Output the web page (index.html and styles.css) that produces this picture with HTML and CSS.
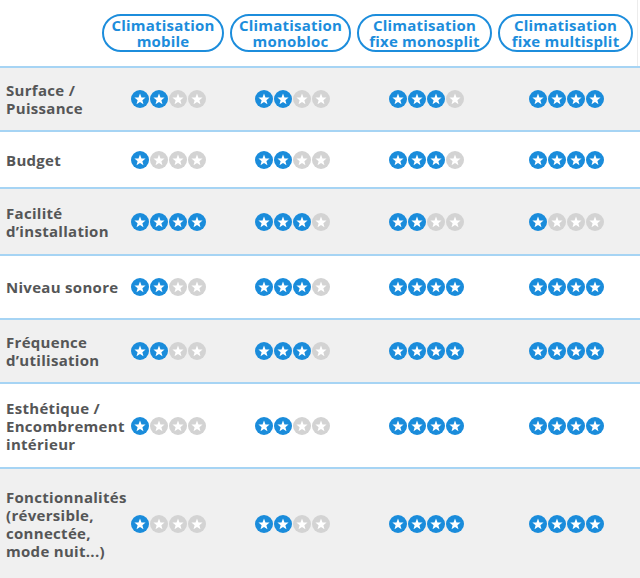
FILE: index.html
```html
<!DOCTYPE html>
<html lang="fr">
<head>
<meta charset="utf-8">
<title>Comparatif climatisation</title>
<link rel="stylesheet" href="styles.css">
</head>
<body>
<svg class="defs" width="0" height="0" aria-hidden="true">
  <symbol id="star" viewBox="0 0 20 20">
    <circle cx="10" cy="10" r="10"/>
    <path fill="#fff" d="M10 3.9 L11.65 8.2 L16.2 8.4 L12.65 11.3 L13.85 15.7 L10 13.2 L6.15 15.7 L7.35 11.3 L3.8 8.4 L8.35 8.2Z"/>
  </symbol>
</svg>
<div class="table">
  <div class="head">
    <div class="pill p1">Climatisation<br>mobile</div>
    <div class="pill p2">Climatisation<br>monobloc</div>
    <div class="pill p3">Climatisation<br>fixe monosplit</div>
    <div class="pill p4">Climatisation<br>fixe multisplit</div>
  </div>
  <div id="rows"></div>
</div>
<script src="app.js"></script>
</body>
</html>
```
FILE: app.js
```js
const data = [
  ["Surface /<br>Puissance", [2,2,3,4], "alt"],
  ["Budget", [1,2,3,4], ""],
  ["Facilité<br>d’installation", [4,3,2,1], "alt roomy"],
  ["Niveau sonore", [2,3,4,4], "wide"],
  ["Fréquence<br>d’utilisation", [2,3,4,4], "alt"],
  ["Esthétique /<br>Encombrement<br>intérieur", [1,2,4,4], "roomy"],
  ["Fonctionnalités<br>(réversible,<br>connectée,<br>mode nuit...)", [1,2,4,4], "alt last"]
];
const root = document.getElementById("rows");
let html = "";
for (const [label, vals, cls] of data) {
  html += `<div class="row ${cls}"><div class="label">${label}</div>`;
  for (const v of vals) {
    html += `<div class="stars">`;
    for (let i = 0; i < 4; i++) {
      html += `<svg class="star ${i < v ? "on" : "off"}" viewBox="0 0 20 20"><use href="#star"/></svg>`;
    }
    html += `</div>`;
  }
  html += `</div>`;
}
root.innerHTML = html;
```
FILE: styles.css
```css
html, body {
  margin: 0;
  padding: 0;
  background: #fff;
}
body {
  font-family: "Open Sans", Lato, sans-serif;
  font-weight: 700;
  width: 640px;
  height: 578px;
  overflow: hidden;
}
.defs {
  position: absolute;
}
.head {
  display: flex;
  gap: 6px;
  height: 66px;
  box-sizing: border-box;
  padding: 14px 0 0 102px;
  width: 638px;
  border-right: 1px solid #ececec;
}
.pill {
  height: 38px;
  box-sizing: border-box;
  border: 2px solid #1c8ddc;
  border-radius: 20px;
  color: #1c8ddc;
  font-size: 15px;
  letter-spacing: 0.2px;
  line-height: 16.5px;
  text-align: center;
  display: flex;
  align-items: center;
  justify-content: center;
  white-space: nowrap;
}
.p1 { width: 122px; }
.p2 { width: 121px; }
.p3 { width: 135px; }
.p4 { width: 135px; }
.row {
  display: grid;
  grid-template-columns: 131px 124px 134px 140px 1fr;
  align-items: center;
  box-sizing: border-box;
  border-top: 2px solid #a6d4f4;
  padding: 13px 0;
  min-height: 57px;
  background: #fff;
}
.row.alt {
  background: #f0f0f0;
}
.row.roomy {
  padding: 14.5px 0;
}
.row.wide {
  min-height: 64px;
}
.row.last {
  padding: 18.5px 0;
}
.label {
  padding-left: 6px;
  color: #555657;
  font-size: 15px;
  letter-spacing: 0.3px;
  line-height: 18px;
  white-space: nowrap;
}
.stars {
  display: flex;
  gap: 1px;
}
.star {
  width: 18px;
  height: 18px;
  display: block;
}
.star.on { fill: #1a8cdb; }
.star.off { fill: #d3d3d3; }
```
